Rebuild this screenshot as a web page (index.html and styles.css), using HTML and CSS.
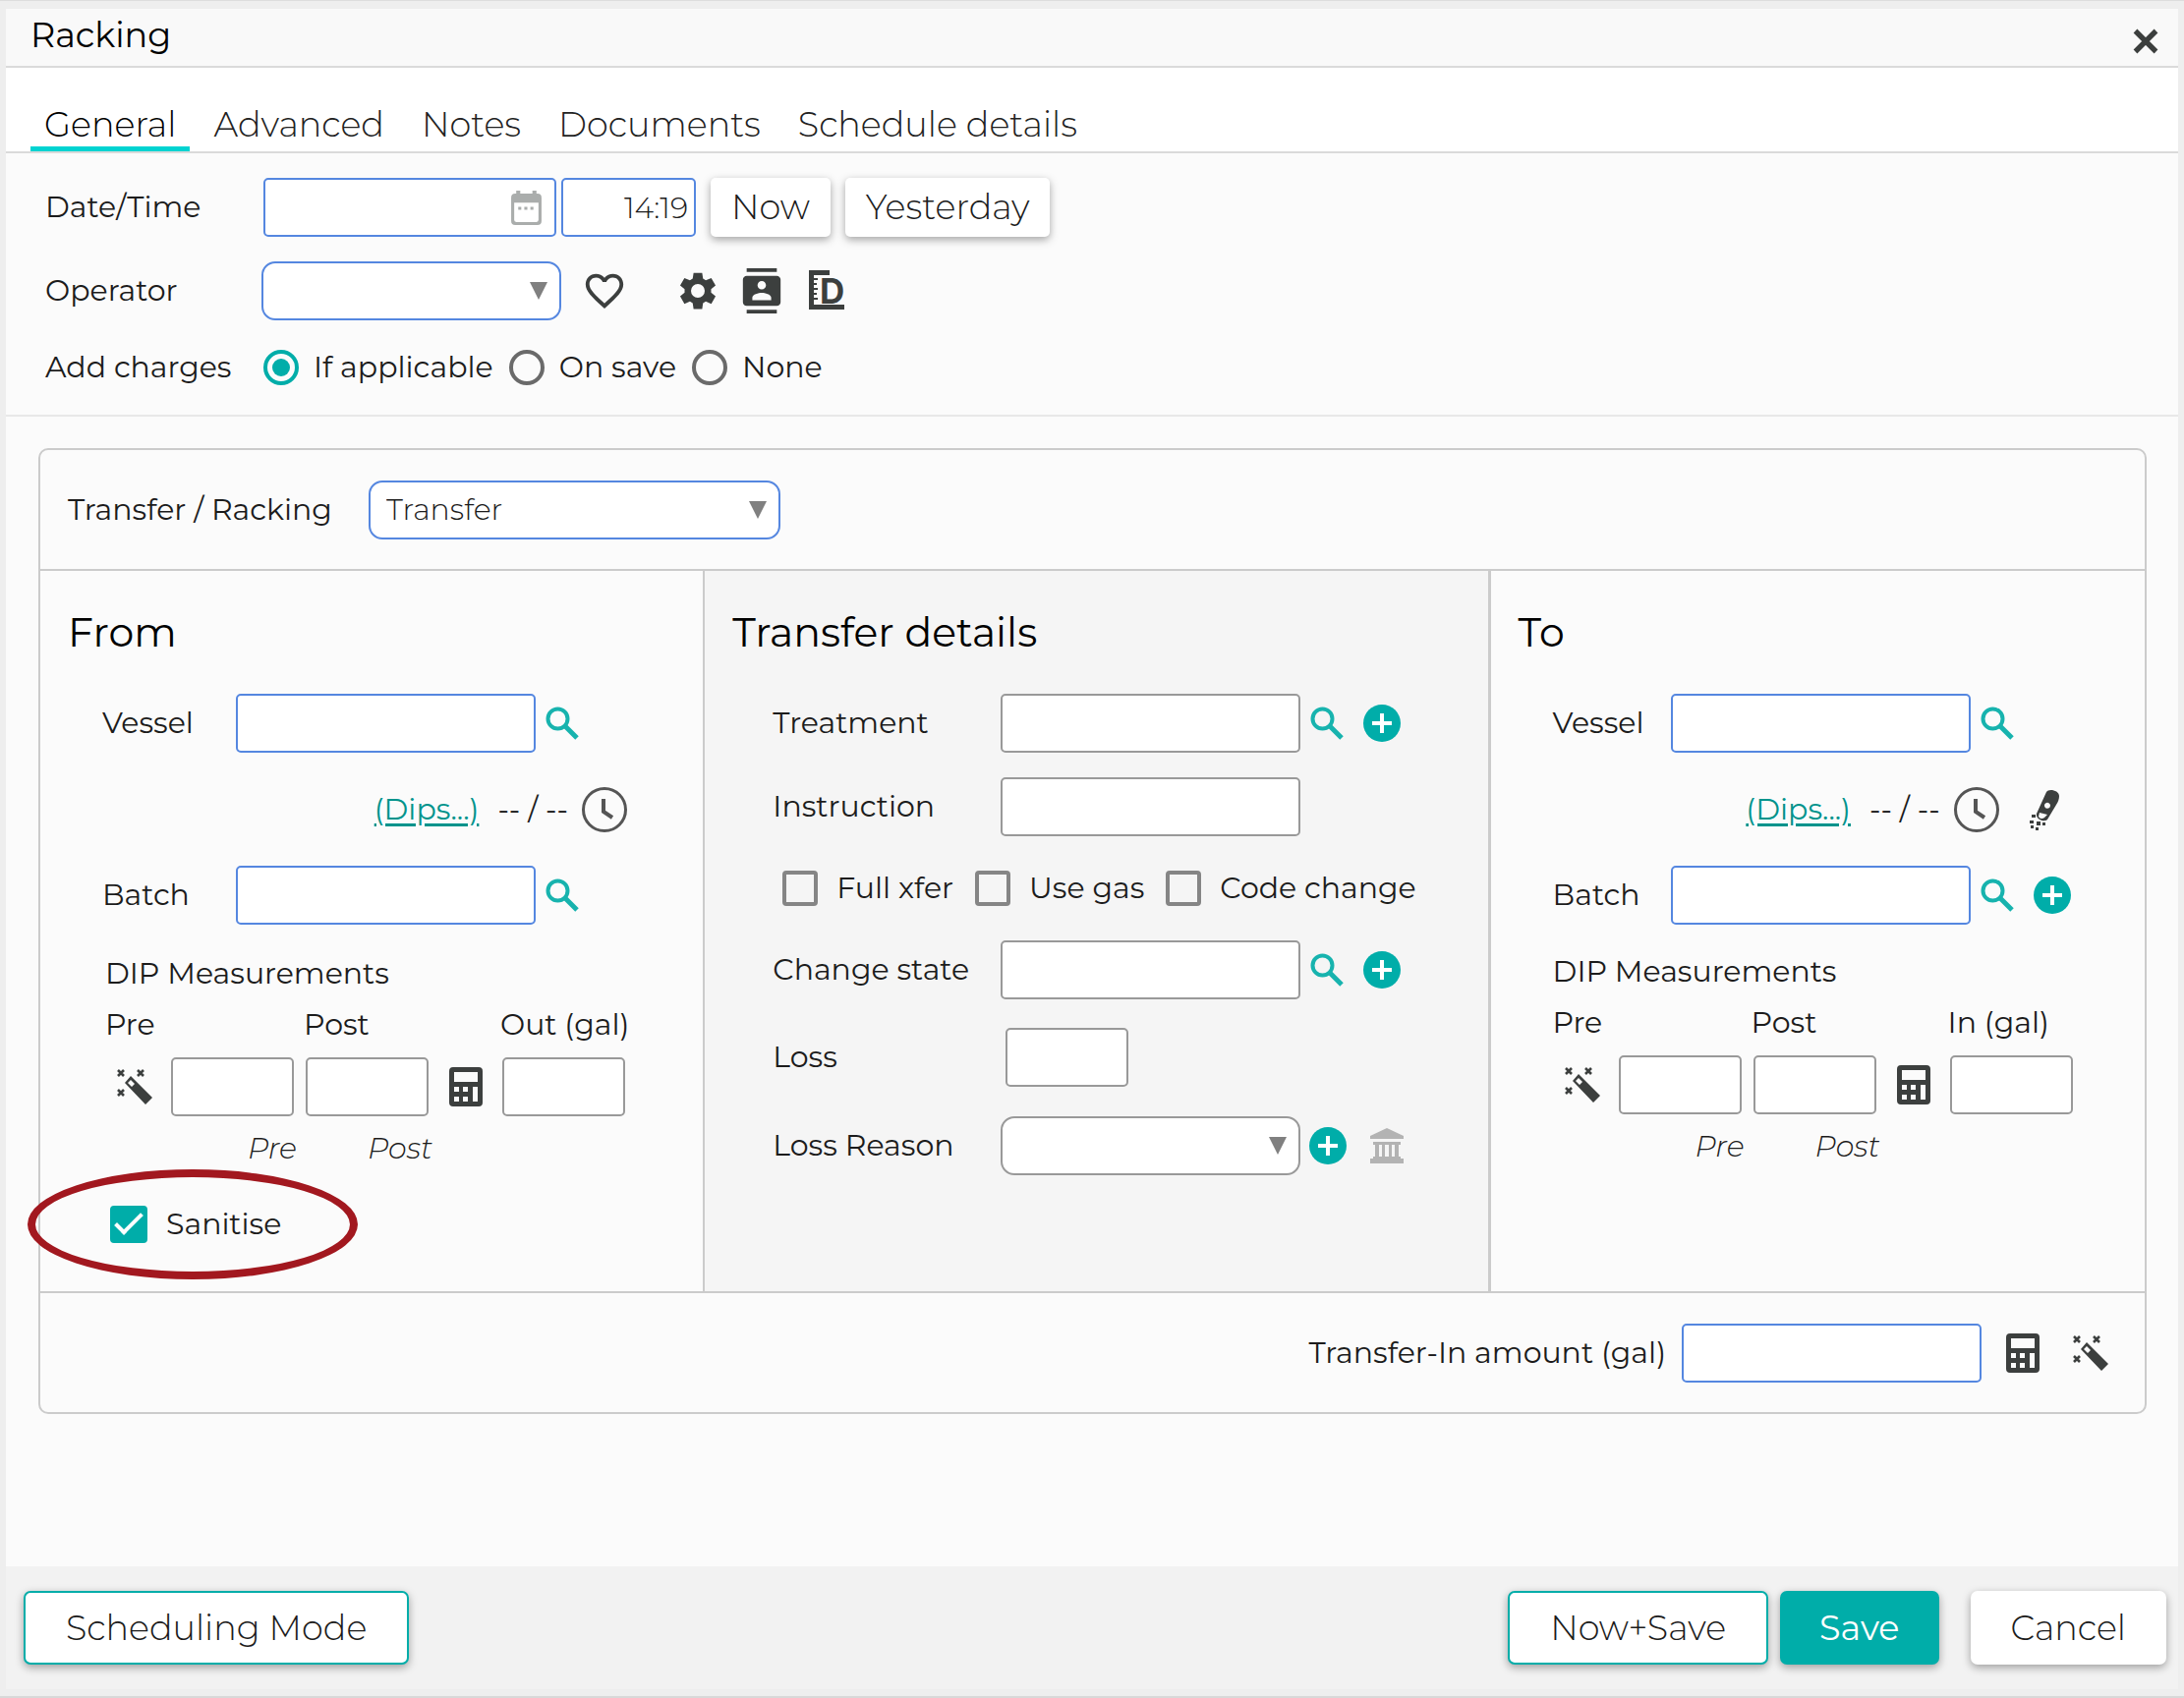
FILE: index.html
```html
<!DOCTYPE html>
<html lang="en">
<head>
  <meta charset="UTF-8">
  <meta name="viewport" content="width=device-width, initial-scale=1">
  <title>Racking</title>
  <link rel="stylesheet" href="styles.css">
</head>
<body>
  <!-- Icon sprite -->
  <svg class="sprite" aria-hidden="true">
    <symbol id="i-close" viewBox="0 0 24 24"><path d="M3 3 21 21M21 3 3 21" fill="none" stroke="currentColor" stroke-width="4.6"/></symbol>
    <symbol id="i-calendar" viewBox="0 0 30 34"><path fill="currentColor" fill-rule="evenodd" d="M5 0h4v3h12V0h4v3h1a4 4 0 0 1 4 4v23a4 4 0 0 1-4 4H4a4 4 0 0 1-4-4V7a4 4 0 0 1 4-4h1zM3 12v17a2 2 0 0 0 2 2h20a2 2 0 0 0 2-2V12zm4 4h3v3H7zm6 0h3v3h-3zm6 0h3v3h-3z"/></symbol>
    <symbol id="i-heart" viewBox="0 0 24 24"><path fill="currentColor" d="M16.5 3c-1.74 0-3.41.81-4.5 2.09C10.91 3.81 9.24 3 7.5 3 4.42 3 2 5.42 2 8.5c0 3.78 3.4 6.86 8.55 11.54L12 21.35l1.45-1.32C18.6 15.36 22 12.28 22 8.5 22 5.42 19.58 3 16.5 3zm-4.4 15.55-.1.1-.1-.1C7.14 14.24 4 11.39 4 8.5 4 6.5 5.5 5 7.5 5c1.54 0 3.04.99 3.57 2.36h1.87C13.46 5.99 14.96 5 16.5 5c2 0 3.5 1.5 3.5 3.5 0 2.89-3.14 5.74-7.9 10.05z"/></symbol>
    <symbol id="i-gear" viewBox="0 0 24 24"><path fill="currentColor" fill-rule="evenodd" d="M9.500 1.500h5l.5 3.400 1.600.9 3.200-1.300 2.500 4.300-2.600 2.200v2l2.600 2.200-2.500 4.300-3.200-1.300-1.600.9-.5 3.400h-5L9 19.100l-1.600-.9-3.200 1.300-2.500-4.300L4.300 13v-2L1.700 8.800l2.500-4.300 3.200 1.300L9 4.900zM12 8a4 4 0 1 0 0 8 4 4 0 0 0 0-8z"/></symbol>
    <symbol id="i-contact" viewBox="0 0 24 24"><path fill="currentColor" d="M20 0H4v2h16V0zM4 24h16v-2H4v2zM20 4H4c-1.1 0-2 .9-2 2v12c0 1.100.9 2 2 2h16c1.100 0 2-.9 2-2V6c0-1.100-.9-2-2-2zm-8 2.750c1.240 0 2.250 1.010 2.250 2.250s-1.010 2.250-2.250 2.250S9.750 10.240 9.750 9 10.760 6.750 12 6.750zM17 17H7v-1.500c0-1.670 3.330-2.500 5-2.500s5 .83 5 2.500V17z"/></symbol>
    <symbol id="i-dip" viewBox="0 0 36 42"><path fill="currentColor" d="M0 0h21v5H5v3h4v2H5v3h3v2H5v3h4v2H5v3h3v2H5v3h4v2H5v5h31v5H0z"/><text x="11" y="34" font-family="Inter, sans-serif" font-size="35" font-weight="700" fill="currentColor">D</text></symbol>
    <symbol id="i-search" viewBox="0 0 34 34"><g fill="none" stroke="currentColor" stroke-width="4"><circle cx="12.500" cy="12.500" r="10"/><path d="M20 20 32 32" stroke-width="5"/></g></symbol>
    <symbol id="i-plus" viewBox="0 0 38 38"><circle cx="19" cy="19" r="19" fill="currentColor"/><path d="M19 9v20M9 19h20" stroke="#fff" stroke-width="4"/></symbol>
    <symbol id="i-clock" viewBox="0 0 48 48"><g fill="none" stroke="currentColor" stroke-width="3"><circle cx="24" cy="24" r="21.500"/><path d="M23 13v13l9 6" stroke-width="4"/></g></symbol>
    <symbol id="i-wand" viewBox="0 0 36 36"><path d="m1 1 6 6M7 1 1 7M21 1l6 6M27 1l-6 6M1 21l6 6M7 21l-6 6" stroke="currentColor" stroke-width="2.600"/><path fill="currentColor" fill-rule="evenodd" d="m14 7 22 22-7 7L8 14zm0 4-3 3 4 4 3-3z"/></symbol>
    <symbol id="i-calc" viewBox="0 0 34 40"><path fill="currentColor" fill-rule="evenodd" d="M4 0h26a4 4 0 0 1 4 4v32a4 4 0 0 1-4 4H4a4 4 0 0 1-4-4V4a4 4 0 0 1 4-4zm1 5v10h24V5zm0 15v5h5v-5zm9 0v5h5v-5zM5 30v5h5v-5zm9 0v5h5v-5zm10-10v15h5V20z"/></symbol>
    <symbol id="i-bank" viewBox="0 0 34 36"><path fill="currentColor" d="M17 0 34 8v3H0V8zM3 14h28v3H3zM5 17h4v12H5zM12 17h3v12h-3zM19 17h3v12h-3zM25 17h4v12h-4zM3 29h28v2h3v5H0v-5h3z"/></symbol>
    <symbol id="i-torch" viewBox="0 0 30 42"><path fill="currentColor" fill-rule="evenodd" d="M17 3c2-4 13-2 13 4 0 3-1 6-3 9l-9 15c-3 3-12 0-11-6zm0 11a3 3 0 1 0 4 3 3 3 0 0 0-4-3zm-7 10-1 4c1 2 4 3 6 1l3-3z"/><path fill="currentColor" d="M2 26h4v3H2zM0 32h4v3H0zM7 33h4v4H7zM13 34h3v3h-3zM1 37h3v3H1zM6 39h3v3H6z"/></symbol>
  </svg>

  <main class="dialog">
    <header class="title-bar">
      <h1>Racking</h1>
      <button class="icon-btn close" aria-label="Close"><svg><use href="#i-close"/></svg></button>
    </header>

    <nav class="tabs">
      <a href="#general" class="active">General</a>
      <a href="#advanced">Advanced</a>
      <a href="#notes">Notes</a>
      <a href="#documents">Documents</a>
      <a href="#schedule">Schedule details</a>
    </nav>

    <section class="general">
      <div class="row">
        <label class="row-label" for="date">Date/Time</label>
        <div class="date-box">
          <input type="text" id="date" class="box required">
          <svg class="calendar"><use href="#i-calendar"/></svg>
        </div>
        <input type="text" id="time" class="box required time" value="14:19" aria-label="Time">
        <button class="btn small">Now</button>
        <button class="btn small">Yesterday</button>
      </div>
      <div class="row">
        <label class="row-label" for="operator">Operator</label>
        <div class="select operator">
          <select id="operator" class="box required"><option></option></select>
        </div>
        <button class="icon-btn heart" aria-label="Favourite"><svg><use href="#i-heart"/></svg></button>
        <button class="icon-btn gear" aria-label="Settings"><svg><use href="#i-gear"/></svg></button>
        <button class="icon-btn contact" aria-label="Contacts"><svg><use href="#i-contact"/></svg></button>
        <button class="icon-btn dip-icon" aria-label="Dips"><svg><use href="#i-dip"/></svg></button>
      </div>
      <div class="row charges" role="radiogroup" aria-labelledby="charges-label">
        <span class="row-label" id="charges-label">Add charges</span>
        <label><input type="radio" name="charges" checked>If applicable</label>
        <label><input type="radio" name="charges">On save</label>
        <label><input type="radio" name="charges">None</label>
      </div>
    </section>

    <section class="panel">
      <div class="panel-head">
        <label for="kind">Transfer / Racking</label>
        <div class="select kind">
          <select id="kind" class="box required"><option>Transfer</option></select>
        </div>
      </div>

      <div class="columns">
        <!-- From -->
        <div class="column from">
          <h2>From</h2>
          <div class="field">
            <label for="from-vessel">Vessel</label>
            <input type="text" id="from-vessel" class="box required">
            <button class="icon-btn search" aria-label="Find vessel"><svg><use href="#i-search"/></svg></button>
          </div>
          <div class="dips">
            <a href="#dips">(Dips...)</a>
            <span>-- / --</span>
            <button class="icon-btn clock" aria-label="History"><svg><use href="#i-clock"/></svg></button>
          </div>
          <div class="field">
            <label for="from-batch">Batch</label>
            <input type="text" id="from-batch" class="box required">
            <button class="icon-btn search" aria-label="Find batch"><svg><use href="#i-search"/></svg></button>
          </div>
          <div class="measure">
            <h3>DIP Measurements</h3>
            <div class="measure-labels">
              <label for="from-pre">Pre</label>
              <label for="from-post">Post</label>
              <label for="from-out">Out (gal)</label>
            </div>
            <div class="measure-inputs">
              <button class="icon-btn wand" aria-label="Fill in"><svg><use href="#i-wand"/></svg></button>
              <input type="text" id="from-pre" class="box">
              <input type="text" id="from-post" class="box">
              <button class="icon-btn calc" aria-label="Calculate"><svg><use href="#i-calc"/></svg></button>
              <input type="text" id="from-out" class="box">
            </div>
            <div class="measure-notes"><em>Pre</em><em>Post</em></div>
          </div>
          <label class="check sanitise"><input type="checkbox" checked>Sanitise</label>
        </div>

        <!-- Transfer details -->
        <div class="column details">
          <h2>Transfer details</h2>
          <div class="field">
            <label for="treatment">Treatment</label>
            <input type="text" id="treatment" class="box">
            <button class="icon-btn search" aria-label="Find treatment"><svg><use href="#i-search"/></svg></button>
            <button class="icon-btn plus" aria-label="Add treatment"><svg><use href="#i-plus"/></svg></button>
          </div>
          <div class="field instruction">
            <label for="instruction">Instruction</label>
            <input type="text" id="instruction" class="box">
          </div>
          <div class="checks">
            <label class="check"><input type="checkbox">Full xfer</label>
            <label class="check"><input type="checkbox">Use gas</label>
            <label class="check"><input type="checkbox">Code change</label>
          </div>
          <div class="field">
            <label for="state">Change state</label>
            <input type="text" id="state" class="box">
            <button class="icon-btn search" aria-label="Find state"><svg><use href="#i-search"/></svg></button>
            <button class="icon-btn plus" aria-label="Add state"><svg><use href="#i-plus"/></svg></button>
          </div>
          <div class="field loss">
            <label for="loss">Loss</label>
            <input type="text" id="loss" class="box">
          </div>
          <div class="field loss-reason">
            <label for="reason">Loss Reason</label>
            <div class="select">
              <select id="reason" class="box"><option></option></select>
            </div>
            <button class="icon-btn plus" aria-label="Add reason"><svg><use href="#i-plus"/></svg></button>
            <button class="icon-btn bank" aria-label="Tax class"><svg><use href="#i-bank"/></svg></button>
          </div>
        </div>

        <!-- To -->
        <div class="column to">
          <h2>To</h2>
          <div class="field">
            <label for="to-vessel">Vessel</label>
            <input type="text" id="to-vessel" class="box required">
            <button class="icon-btn search" aria-label="Find vessel"><svg><use href="#i-search"/></svg></button>
          </div>
          <div class="dips">
            <a href="#dips">(Dips...)</a>
            <span>-- / --</span>
            <button class="icon-btn clock" aria-label="History"><svg><use href="#i-clock"/></svg></button>
            <button class="icon-btn torch" aria-label="Clear"><svg><use href="#i-torch"/></svg></button>
          </div>
          <div class="field">
            <label for="to-batch">Batch</label>
            <input type="text" id="to-batch" class="box required">
            <button class="icon-btn search" aria-label="Find batch"><svg><use href="#i-search"/></svg></button>
            <button class="icon-btn plus" aria-label="Add batch"><svg><use href="#i-plus"/></svg></button>
          </div>
          <div class="measure">
            <h3>DIP Measurements</h3>
            <div class="measure-labels">
              <label for="to-pre">Pre</label>
              <label for="to-post">Post</label>
              <label for="to-in">In (gal)</label>
            </div>
            <div class="measure-inputs">
              <button class="icon-btn wand" aria-label="Fill in"><svg><use href="#i-wand"/></svg></button>
              <input type="text" id="to-pre" class="box">
              <input type="text" id="to-post" class="box">
              <button class="icon-btn calc" aria-label="Calculate"><svg><use href="#i-calc"/></svg></button>
              <input type="text" id="to-in" class="box">
            </div>
            <div class="measure-notes"><em>Pre</em><em>Post</em></div>
          </div>
        </div>
      </div>

      <div class="panel-foot">
        <label for="amount">Transfer-In amount (gal)</label>
        <input type="text" id="amount" class="box required">
        <button class="icon-btn calc" aria-label="Calculate"><svg><use href="#i-calc"/></svg></button>
        <button class="icon-btn wand" aria-label="Fill in"><svg><use href="#i-wand"/></svg></button>
      </div>
    </section>

    <footer class="actions">
      <button class="btn outline mode">Scheduling Mode</button>
      <button class="btn outline">Now+Save</button>
      <button class="btn primary">Save</button>
      <button class="btn cancel">Cancel</button>
    </footer>
  </main>
</body>
</html>
```
FILE: styles.css
```css
*, *::before, *::after {
  box-sizing: border-box;
}
:root {
  --teal: #00ada9;
  --blue: #5587e0;
  --icon: #3c3f3e;
  --line: #cbcbcb;
}
body {
  margin: 0;
  min-height: 100vh;
  display: flex;
  padding: 8px 6px 7px;
  background: #eee;
  border-top: 1px solid #ddd;
  border-bottom: 2px solid #d8d8d8;
  font-family: Montserrat, Inter, sans-serif;
  font-size: 30px;
  line-height: 52px;
  color: #1c1c1c;
}
h1, h2, h3 {
  margin: 0;
  font-weight: 400;
}
input, select, button {
  font: inherit;
  color: inherit;
  margin: 0;
}
.sprite {
  display: none;
}
.dialog {
  flex: 1;
  display: flex;
  flex-direction: column;
  background: #fbfbfb;
}

/* Title and tabs */
.title-bar {
  display: flex;
  justify-content: space-between;
  align-items: center;
  height: 60px;
  padding: 0 19px 0 25px;
  background: #f9f9f9;
  border-bottom: 2px solid #dadada;
}
h1 {
  font-size: 35px;
  line-height: 46px;
  padding-bottom: 4px;
  color: #000;
}
.tabs {
  display: flex;
  align-items: flex-end;
  gap: 10px;
  height: 87px;
  padding-left: 25px;
  background: #fff;
  border-bottom: 2px solid #dadada;
}
.tabs a {
  padding: 0 14px;
  border-bottom: 5px solid transparent;
  font-size: 35px;
  font-weight: 300;
  line-height: 45px;
  color: #222;
  text-decoration: none;
}
.tabs .active {
  border-color: #00d3d1;
  color: #000;
}

/* Shared controls */
.box {
  width: 305px;
  height: 60px;
  padding: 0 6px;
  border: 2px solid #999;
  border-radius: 5px;
  background: #fff;
  font-weight: 300;
}
.required {
  border-color: var(--blue);
}
.select {
  position: relative;
  display: flex;
}
.select .box {
  width: 100%;
  padding: 0 16px;
  border-radius: 14px;
  appearance: none;
}
.select::after {
  content: "";
  position: absolute;
  right: 14px;
  top: 21px;
  border: 9px solid transparent;
  border-top: 18px solid #808080;
  border-bottom: 0;
  pointer-events: none;
}
.icon-btn {
  display: flex;
  flex: none;
  align-items: center;
  justify-content: center;
  padding: 0;
  border: 0;
  background: none;
  color: var(--icon);
}
.icon-btn svg {
  width: 100%;
  height: 100%;
}
.close {
  width: 28px;
  height: 28px;
  margin-top: 8px;
}
.search {
  width: 34px;
  height: 34px;
  margin-left: 10px;
  color: #17b3ae;
}
.plus {
  width: 38px;
  height: 38px;
  margin-left: 20px;
  color: var(--teal);
}
.clock {
  width: 48px;
  height: 48px;
  color: #555;
}
.calc {
  width: 34px;
  height: 40px;
}
.wand {
  width: 36px;
  height: 36px;
}
.btn {
  height: 75px;
  padding: 0 41px;
  border: 2px solid transparent;
  border-radius: 7px;
  background: #fff;
  box-shadow: 0 3px 8px rgba(0, 0, 0, .35);
  font-size: 35px;
  font-weight: 300;
  white-space: nowrap;
}
.small {
  height: 60px;
  padding: 0 19px;
  border-radius: 5px;
}
.outline {
  border-color: var(--teal);
}
.primary {
  padding: 0 38px;
  background: var(--teal);
  color: #fff;
  font-weight: 400;
}
input[type="radio"],
input[type="checkbox"] {
  appearance: none;
  flex: none;
  display: grid;
  place-items: center;
  width: 36px;
  height: 36px;
  border: 4px solid #858585;
  border-radius: 4px;
}
input[type="radio"] {
  border-color: #6a6a6a;
  border-radius: 50%;
}
input[type="radio"]:checked {
  border-color: var(--teal);
}
input[type="radio"]:checked::before {
  content: "";
  width: 18px;
  height: 18px;
  border-radius: 50%;
  background: var(--teal);
}
input[type="checkbox"]:checked {
  width: 38px;
  height: 38px;
  border-color: var(--teal);
  background: var(--teal);
}
input[type="checkbox"]:checked::before {
  content: "";
  width: 28px;
  height: 14px;
  margin-bottom: 8px;
  border: solid #fff;
  border-width: 0 0 4px 4px;
  transform: rotate(-45deg);
}

/* General fields */
.general {
  display: flex;
  flex-direction: column;
  gap: 25px;
  padding: 25px 40px 30px;
  border-bottom: 2px solid #e8e8e8;
}
.row {
  display: flex;
  align-items: center;
}
.row-label {
  width: 220px;
}
.date-box {
  position: relative;
  display: flex;
  margin: 0 5px 0 2px;
}
.date-box .box {
  width: 298px;
}
.calendar {
  position: absolute;
  right: 15px;
  top: 13px;
  width: 31px;
  height: 35px;
  color: #aaadac;
}
.time {
  width: 137px;
  text-align: right;
}
.small {
  margin-left: 15px;
}
.operator {
  width: 305px;
}
.heart {
  width: 46px;
  height: 46px;
  margin-left: 21px;
}
.gear {
  width: 42px;
  height: 42px;
  margin-left: 51px;
}
.contact {
  width: 46px;
  height: 46px;
  margin-left: 21px;
}
.dip-icon {
  width: 36px;
  height: 42px;
  margin-left: 25px;
}
.charges {
  height: 36px;
  margin-top: 5px;
}
.charges label {
  display: flex;
  align-items: center;
  gap: 15px;
  margin-right: 14px;
}
.charges input {
  margin-left: 2px;
}

/* Transfer panel */
.panel {
  margin: 32px 32px 32px 33px;
  border: 2px solid var(--line);
  border-radius: 10px;
}
.panel-head {
  display: flex;
  align-items: center;
  height: 123px;
  padding-left: 28px;
  border-bottom: 2px solid var(--line);
}
.panel-head label {
  width: 306px;
}
.kind {
  width: 419px;
}
.columns {
  display: grid;
  grid-template-columns: 675fr 799fr 669fr;
  border-bottom: 2px solid var(--line);
}
.column {
  padding: 38px 0 49px 28px;
}
.column + .column {
  border-left: 2px solid var(--line);
}
.column.to {
  border-left-width: 3px;
}
.details {
  background: #f5f5f5;
}
h2 {
  margin-bottom: 39px;
  font-size: 41px;
  line-height: 48px;
  color: #000;
}
h3 {
  font-size: 30px;
}
.field {
  display: flex;
  align-items: center;
  margin-left: 35px;
}
.from .field label {
  width: 136px;
}
.to .field label {
  width: 120px;
}
.details .field {
  margin-left: 41px;
}
.details .field label {
  width: 232px;
}
.details .select {
  width: 305px;
}
.dips {
  display: flex;
  align-items: center;
  justify-content: flex-end;
  width: 570px;
  height: 115px;
}
.dips a {
  margin-right: 19px;
  color: #00938c;
  text-decoration-thickness: 3px;
  text-underline-offset: 4px;
}
.dips .clock {
  margin-left: 13px;
}
.to .dips {
  width: 550px;
}
.torch {
  width: 30px;
  height: 42px;
  margin-left: 30px;
}
.measure {
  margin: 24px 0 0 38px;
}
.to .measure {
  margin: 22px 0 0 35px;
}
.measure-labels {
  display: grid;
  grid-template-columns: 202px 200px 1fr;
}
.measure-inputs {
  display: flex;
  align-items: center;
  margin: 7px 0;
}
.measure-inputs .box {
  width: 125px;
}
.measure-inputs .box + .box {
  margin-left: 12px;
}
.measure-inputs .wand {
  margin: 0 19px 0 12px;
}
.measure-inputs .calc {
  margin: 0 20px 0 21px;
}
.measure-notes {
  display: grid;
  grid-template-columns: 122px 1fr;
  padding-left: 145px;
  font-weight: 300;
}
.check {
  display: flex;
  align-items: center;
  gap: 19px;
}
.sanitise {
  position: relative;
  width: max-content;
  height: 38px;
  margin: 32px 0 0 43px;
}
/* Ring drawn round the option */
.sanitise::after {
  content: "";
  position: absolute;
  left: -84px;
  top: -37px;
  width: 336px;
  height: 112px;
  border: 8px solid #a2181f;
  border-radius: 50%;
  pointer-events: none;
}
.instruction {
  margin-top: 25px;
}
.checks {
  display: flex;
  align-items: center;
  gap: 22px;
  height: 106px;
  margin-left: 51px;
}
.loss {
  margin-top: 29px;
}
.loss .box {
  width: 125px;
  margin-left: 5px;
}
.loss-reason {
  margin-top: 30px;
}
.loss-reason .plus {
  margin-left: 9px;
}
.bank {
  width: 34px;
  height: 36px;
  margin-left: 24px;
  color: #b3b3b3;
}
.panel-foot {
  display: flex;
  align-items: center;
  justify-content: flex-end;
  height: 121px;
  padding-right: 37px;
}
.panel-foot .box {
  margin: 0 25px 0 16px;
}
.panel-foot .wand {
  margin-left: 34px;
}

/* Bottom bar */
.actions {
  display: flex;
  align-items: center;
  gap: 12px;
  height: 125px;
  margin-top: auto;
  padding: 0 12px 0 18px;
  background: #f2f2f2;
}
.mode {
  margin-right: auto;
}
.cancel {
  margin-left: 20px;
  padding: 0 39px;
}
```
